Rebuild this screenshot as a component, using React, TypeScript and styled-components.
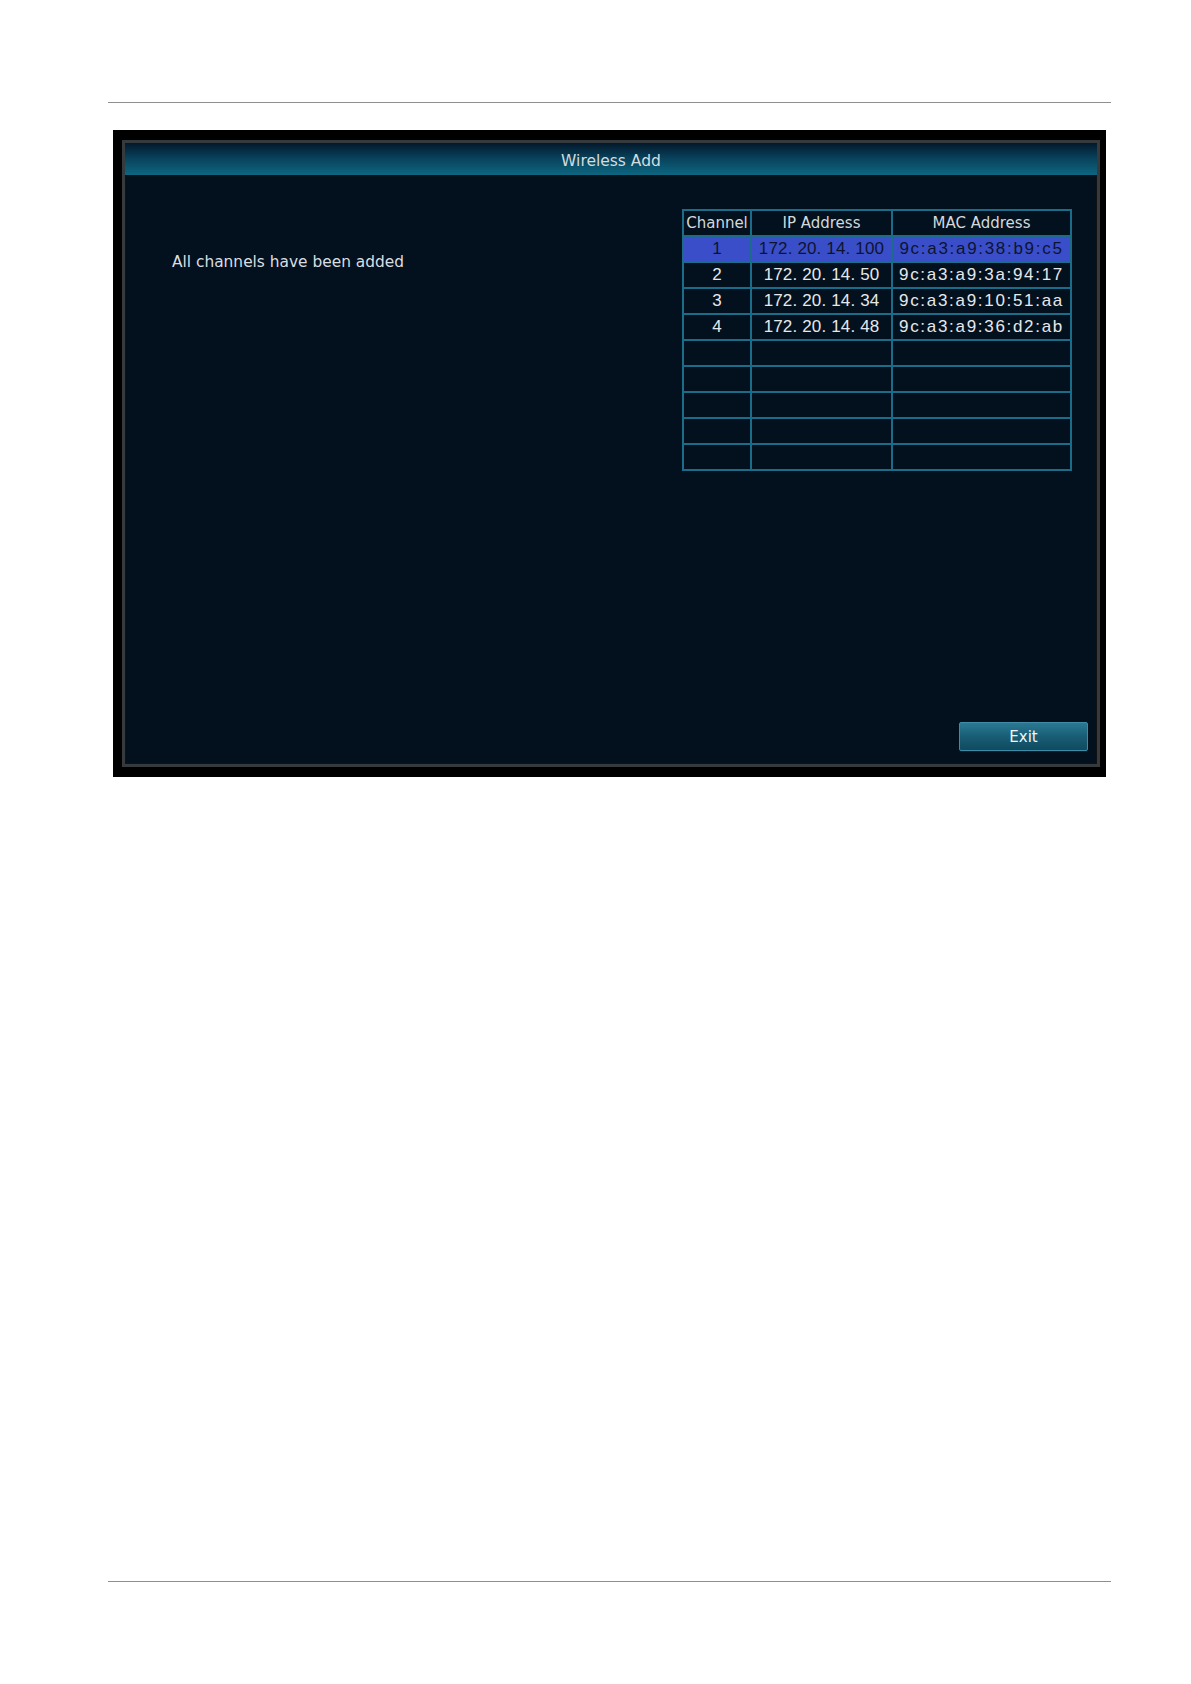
import React from 'react'
import styled, { createGlobalStyle } from 'styled-components'

const GlobalStyle = createGlobalStyle`
    html, body {
        margin: 0;
        padding: 0;
        background: #ffffff;
    }
    body {
        font-family: 'DejaVu Sans', Verdana, sans-serif;
    }
`;

const Sheet = styled.div`
    display: flex;
    flex-direction: column;
    box-sizing: border-box;
    min-height: 1684px;
    padding: 102px 0 102px 108px;
`;

const Rule = styled.div`
    width: 1003px;
    height: 1px;
    background: #8f8f8f;
`;

const BottomRule = styled(Rule)`
    margin-top: auto;
`;

const Screen = styled.div`
    box-sizing: border-box;
    width: 993px;
    height: 647px;
    margin: 27px 0 0 5px;
    padding: 10px 6px 10px 9px;
    background: #000000;
`;

const Frame = styled.div`
    display: flex;
    flex-direction: column;
    box-sizing: border-box;
    height: 100%;
    border: 3px solid #363a3c;
    box-shadow: inset 0 0 0 1px #111;
    background: #03101d;
`;

const TitleBar = styled.div`
    display: flex;
    align-items: center;
    justify-content: center;
    box-sizing: border-box;
    height: 34px;
    padding-top: 3px;
    border-bottom: 2px solid #04121c;
    background: linear-gradient(to bottom, #04182a 0%, #08405a 45%, #0d6680 100%);
    color: #d3dcdf;
    font-size: 15.5px;
`;

const Body = styled.div`
    flex: 1;
    display: flex;
    justify-content: space-between;
    align-items: flex-start;
    padding: 32px 25px 0 47px;
`;

const Message = styled.div`
    padding-top: 44px;
    color: #d9dee1;
    font-size: 15.4px;
    line-height: 18px;
`;

const Grid = styled.table`
    border-collapse: collapse;
    table-layout: fixed;
    width: 388px;
`;

const HeadCell = styled.th<{ $w: number }>`
    width: ${p => p.$w}px;
    height: 24px;
    padding: 0;
    border: 2px solid #1b6c88;
    color: #d2d9dc;
    font-size: 15px;
    font-weight: normal;
    text-align: center;
`;

const Row = styled.tr<{ $active?: boolean }>`
    background: ${p => (p.$active ? '#3a4ec9' : 'transparent')};
    color: ${p => (p.$active ? '#0d1430' : '#e6e8ea')};
`;

const Cell = styled.td<{ $mac?: boolean }>`
    height: 24px;
    padding: 0;
    border: 2px solid #1b6c88;
    font-family: 'Liberation Sans', Arial, sans-serif;
    font-size: 17px;
    letter-spacing: ${p => (p.$mac ? '1.7px' : '0.15px')};
    text-align: center;
    white-space: nowrap;
    overflow: hidden;
`;

const Footer = styled.div`
    display: flex;
    justify-content: flex-end;
    padding: 0 9px 13px 0;
`;

const ExitButton = styled.button`
    width: 129px;
    height: 29px;
    border: 1px solid #3f8ca6;
    border-radius: 2px;
    background: linear-gradient(to bottom, #2b7994 0%, #195d75 50%, #0f4a60 100%);
    box-shadow: 0 1px 0 #0a2230;
    color: #f2f5f6;
    font-family: 'DejaVu Sans', Verdana, sans-serif;
    font-size: 15px;
    cursor: pointer;
`;

const devices = [
    { ch: '1', ip: '172. 20. 14. 100', mac: '9c:a3:a9:38:b9:c5' },
    { ch: '2', ip: '172. 20. 14. 50', mac: '9c:a3:a9:3a:94:17' },
    { ch: '3', ip: '172. 20. 14. 34', mac: '9c:a3:a9:10:51:aa' },
    { ch: '4', ip: '172. 20. 14. 48', mac: '9c:a3:a9:36:d2:ab' },
    { ch: '', ip: '', mac: '' },
    { ch: '', ip: '', mac: '' },
    { ch: '', ip: '', mac: '' },
    { ch: '', ip: '', mac: '' },
    { ch: '', ip: '', mac: '' },
];

const App: React.FC = () => {
    const [selected, setSelected] = React.useState(0);

    return (
        <>
            <GlobalStyle />
            <Sheet>
                <Rule />
                <Screen>
                    <Frame>
                        <TitleBar>Wireless Add</TitleBar>
                        <Body>
                            <Message>All channels have been added</Message>
                            <Grid>
                                <thead>
                                    <tr>
                                        <HeadCell $w={66}>Channel</HeadCell>
                                        <HeadCell $w={139}>IP Address</HeadCell>
                                        <HeadCell $w={177}>MAC Address</HeadCell>
                                    </tr>
                                </thead>
                                <tbody>
                                    {devices.map((d, i) => (
                                        <Row
                                            key={i}
                                            $active={i === selected}
                                            onClick={() => d.ch && setSelected(i)}
                                        >
                                            <Cell>{d.ch}</Cell>
                                            <Cell>{d.ip}</Cell>
                                            <Cell $mac>{d.mac}</Cell>
                                        </Row>
                                    ))}
                                </tbody>
                            </Grid>
                        </Body>
                        <Footer>
                            <ExitButton>Exit</ExitButton>
                        </Footer>
                    </Frame>
                </Screen>
                <BottomRule />
            </Sheet>
        </>
    );
};

export default App;
